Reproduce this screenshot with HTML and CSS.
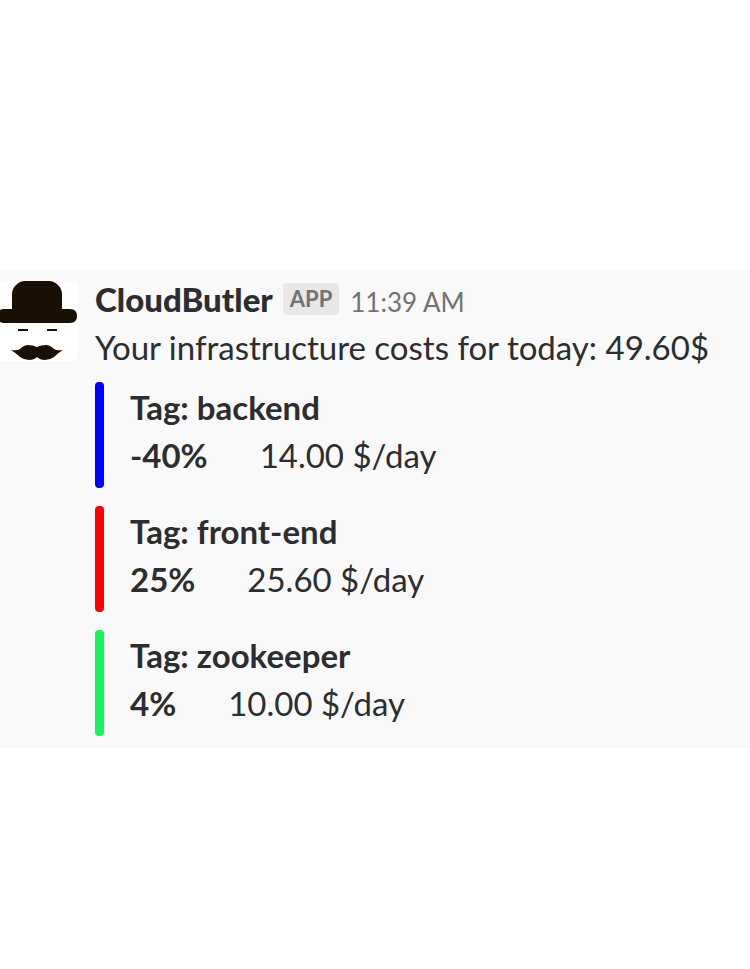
FILE: index.html
```html
<!DOCTYPE html>
<html lang="en">
<head>
  <meta charset="UTF-8">
  <title>CloudButler</title>
  <link rel="stylesheet" href="styles.css">
</head>
<body>
  <main class="message">
    <svg class="avatar" viewBox="0 0 78 80" aria-hidden="true">
      <rect x="-6" width="84" height="80" rx="6" fill="#fff"/>
      <path d="M12 28 V13 Q12 8 16 4 Q20 0 25 0 H49 Q54 0 58 4 Q62 8 62 13 V28 H70 Q77 28 77 35 Q77 42 70 42 H4 Q0 42 -2 38 V31 Q0 28 4 28 Z" fill="#1a0f04"/>
      <path d="M18 49 H28 M47 49 H57" stroke="#1a0f04" stroke-width="2"/>
      <path d="M37 66 Q33 64 28 64 Q24 64 20 68 Q17 70 11 69 Q16 72 20 76 Q24 79 29 79 Q34 79 37 76 Q40 79 45 79 Q50 79 54 76 Q58 72 63 69 Q57 70 54 68 Q50 64 46 64 Q41 64 37 66 Z" fill="#1a0f04"/>
    </svg>
    <div class="content">
      <header class="meta">
        <span class="author">CloudButler</span>
        <span class="badge">APP</span>
        <time class="time">11:39 AM</time>
      </header>
      <p class="text">Your infrastructure costs for today: 49.60$</p>
      <div class="attachments">
        <section class="attachment blue">
          <h2 class="tag">Tag: backend</h2>
          <p class="cost"><b>-40%</b><span>14.00 $/day</span></p>
        </section>
        <section class="attachment red">
          <h2 class="tag">Tag: front-end</h2>
          <p class="cost"><b>25%</b><span>25.60 $/day</span></p>
        </section>
        <section class="attachment green">
          <h2 class="tag">Tag: zookeeper</h2>
          <p class="cost"><b>4%</b><span>10.00 $/day</span></p>
        </section>
      </div>
    </div>
  </main>
</body>
</html>
```
FILE: styles.css
```css
* { box-sizing: border-box; }
body { margin: 0; min-height: 100vh; padding-top: 50px; display: flex; flex-direction: column; justify-content: center; background: #fff; color: #2c2d30; font-family: Lato, sans-serif; font-size: 33px; line-height: 48px; }
.message { display: flex; gap: 17px; background: #f9f9f9; padding: 4px 0 12px; }
.avatar { width: 78px; height: 80px; flex: none; margin-top: 6px; }
.content { flex: 1; min-width: 0; }
.meta { display: flex; align-items: baseline; }
.author { font-weight: 900; }
.badge { align-self: center; margin: 0 11px 0 10px; padding: 0 7px; border-radius: 4px; background: #e8e8e8; color: #717274; font-size: 22px; font-weight: 700; line-height: 32px; }
.time { color: #717274; font-size: 26px; line-height: 32px; }
.text { margin: 0; }
.attachments { display: flex; flex-direction: column; gap: 18px; margin-top: 11px; }
.attachment { position: relative; padding: 1px 0 9px 35px; }
.attachment::before { content: ""; position: absolute; left: 0; top: 0; bottom: 0; width: 9px; border-radius: 4px; }
.blue::before { background: #0000ff; }
.red::before { background: #ff0000; }
.green::before { background: #16f45c; }
.tag { margin: 0; font-size: 33px; font-weight: 700; }
.cost { display: flex; gap: 52px; margin: 0; }
```
